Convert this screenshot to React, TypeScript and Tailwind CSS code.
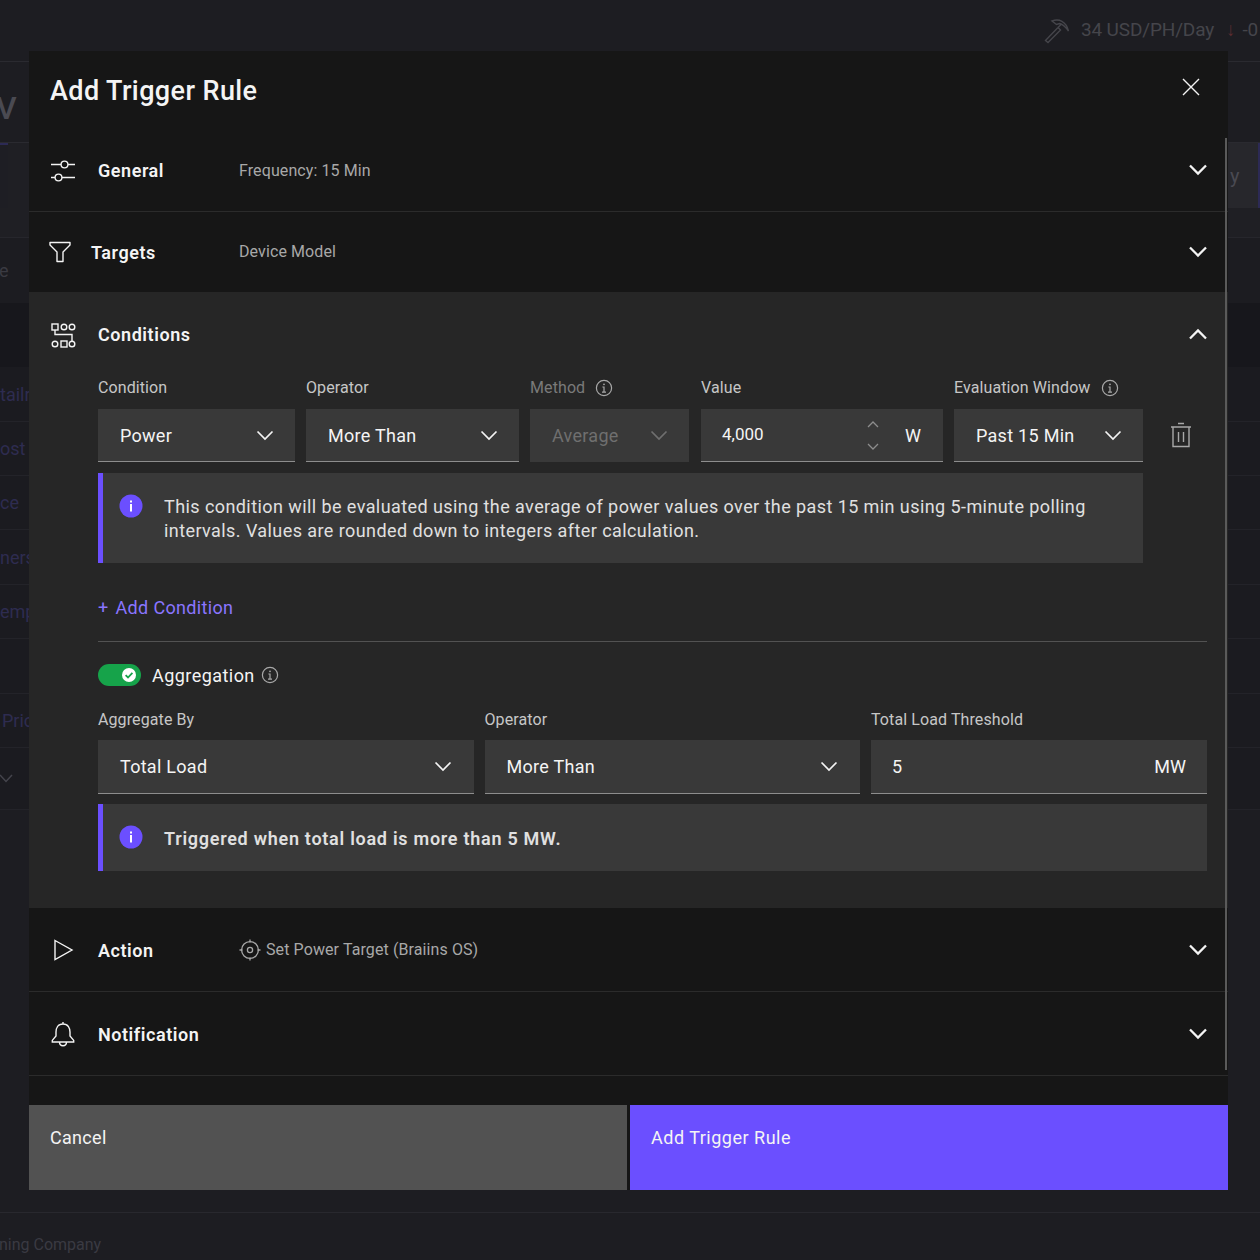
import React from "react";

const Chevron = ({ up = false, className = "" }: { up?: boolean; className?: string }) => (
  <svg width="20" height="12" viewBox="0 0 20 12" fill="none" stroke="currentColor" strokeWidth="2.3" className={className}>
    <path d={up ? "M2 10.5 L10 2.5 L18 10.5" : "M2 1.5 L10 9.5 L18 1.5"} />
  </svg>
);
const SmallChevron = ({ muted = false }: { muted?: boolean }) => (
  <svg width="18" height="11" viewBox="0 0 18 11" fill="none" stroke="currentColor" strokeWidth="1.7" className={muted ? "text-[#6f6f6f]" : "text-[#f4f4f4]"}>
    <path d="M1.5 1.5 L9 9 L16.5 1.5" />
  </svg>
);
const InfoOutline = () => (
  <svg width="18" height="18" viewBox="0 0 18 18" fill="none" stroke="#a8a8a8" strokeWidth="1.2">
    <circle cx="9" cy="9" r="7.6" />
    <path d="M7 13.2 H11 M9 13 V8 H7.4" />
    <circle cx="9" cy="5.3" r="0.9" fill="#a8a8a8" stroke="none" />
  </svg>
);
const InfoFilled = () => (
  <svg width="24" height="24" viewBox="0 0 24 24" className="shrink-0">
    <circle cx="12" cy="12" r="11.5" fill="#6b4fff" />
    <rect x="11" y="10" width="2" height="7.5" fill="#fff" />
    <rect x="11" y="6.5" width="2" height="2" fill="#fff" />
  </svg>
);

const icon = { fill: "none", stroke: "#f4f4f4", strokeWidth: 1.4 };
const SlidersIcon = () => (
  <svg width="26" height="24" viewBox="0 0 26 24" {...icon}>
    <path d="M1 5.5 H11 M18 5.5 H25 M1 18.5 H5 M12 18.5 H25" />
    <circle cx="14.5" cy="5.5" r="3.4" />
    <circle cx="8.5" cy="18.5" r="3.4" />
  </svg>
);
const FunnelIcon = () => (
  <svg width="22" height="22" viewBox="0 0 22 22" {...icon} strokeLinejoin="round">
    <path d="M1 1.5 H21 V4 L14 11 V20.5 H8 V11 L1 4 Z" />
  </svg>
);
const ConditionsIcon = () => (
  <svg width="26" height="26" viewBox="0 0 26 26" {...icon}>
    <rect x="2" y="2" width="6" height="6" />
    <circle cx="14" cy="5" r="2.8" />
    <circle cx="22" cy="5" r="2.8" />
    <path d="M5 8 V12.5 H22 V19" />
    <circle cx="5" cy="22" r="2.8" />
    <rect x="11" y="19" width="6" height="6" />
    <circle cx="22" cy="22" r="2.8" />
  </svg>
);
const PlayIcon = () => (
  <svg width="26" height="24" viewBox="0 0 26 24" {...icon}>
    <path d="M5 2.5 L22 12 L5 21.5 Z" />
  </svg>
);
const BellIcon = () => (
  <svg width="26" height="26" viewBox="0 0 26 26" {...icon}>
    <path d="M13 3 C7.8 3 6 7.2 6 11 V15 L2.3 19.4 V21 H23.7 V19.4 L20 15 V11 C20 7.2 18.2 3 13 3 Z M13 1 V3 M9.5 21 C9.5 26 16.5 26 16.5 21" />
  </svg>
);
const TargetIcon = () => (
  <svg width="22" height="22" viewBox="0 0 22 22" fill="none" stroke="#a8a8a8" strokeWidth="1.3">
    <circle cx="11" cy="11" r="8.4" />
    <circle cx="11" cy="11" r="2.6" />
    <path d="M11 0.5 V3.5 M11 18.5 V21.5 M0.5 11 H3.5 M18.5 11 H21.5" />
  </svg>
);
const TrashIcon = () => (
  <svg width="22" height="26" viewBox="0 0 22 26" fill="none" stroke="#a8a8a8" strokeWidth="1.4">
    <path d="M1 5 H21 M8 1.5 H14 M3 5 V24.5 H19 V5 M8.5 10 V20 M13.5 10 V20" />
  </svg>
);
const PickIcon = () => (
  <svg width="26" height="26" viewBox="0 0 26 26" fill="none" stroke="#45454b" strokeWidth="1.4" className="shrink-0">
    <path d="M1.5 22.5 L14 9.5 L16.5 12 L4 24.5 Z M8 3 C15 0.5 22 3 24.5 13 C21 8 18 6 15.5 5.5 L12.5 6.5 Z M14 9.5 L17.5 6" />
  </svg>
);

const Section = ({ ic, title, titleClass = "w-[141px] ml-[22px]", box = "h-[84px] pt-[1px]", chev = "", children, border = true }: { ic: React.ReactNode; title: string; titleClass?: string; box?: string; chev?: string; children?: React.ReactNode; border?: boolean }) => (
  <div className={`flex ${box} shrink-0 items-center pl-[21px] pr-[20px] ${border ? "border-b border-[#2b2b2b]" : ""}`}>
    <div className="flex w-[26px] justify-center">{ic}</div>
    <div className={`${titleClass} text-[18px] font-semibold tracking-[0.55px] text-[#f4f4f4]`}>{title}</div>
    <div className="flex flex-1 items-center gap-[5px] text-[16px] tracking-[0.1px] text-[#a8a8a8]">{children}</div>
    <Chevron className={`${chev} text-[#f4f4f4]`} />
  </div>
);

const Label = ({ children, info = false, muted = false, mb = "mb-[10px]" }: { children: React.ReactNode; info?: boolean; muted?: boolean; mb?: string }) => (
  <div className={`${mb} flex h-[22px] items-center gap-[10px] text-[16px] tracking-[0.1px] ${muted ? "text-[#7a7a7a]" : "text-[#c6c6c6]"}`}>
    {children}
    {info && <InfoOutline />}
  </div>
);

const Select = ({ value, muted = false, box = "h-[53px] pr-[21px]" }: { value: string; muted?: boolean; box?: string }) => (
  <div className={`flex ${box} items-center justify-between bg-[#393939] pl-[22px] text-[18px] tracking-[0.28px] ${muted ? "text-[#6f6f6f]" : "border-b border-[#8d8d8d] text-[#f4f4f4]"}`}>
    <span>{value}</span>
    <SmallChevron muted={muted} />
  </div>
);

const BgRow = ({ text, h, className = "" }: { text?: string; h: string; className?: string }) => (
  <div className={`${h} flex items-center overflow-hidden whitespace-nowrap border-b border-[#232329] ${className}`}>{text}</div>
);

export default function App() {
  return (
    <div className="relative h-[1260px] w-[1260px] overflow-hidden bg-[#1d1d22] font-['Roboto',sans-serif]">
      {/* dimmed page behind the dialog */}
      <div className="flex h-full flex-col text-[#34343c]">
        <div className="flex h-[62px] items-center whitespace-nowrap border-b border-[#2a2a30] pl-[1044px] text-[19px] tracking-[-0.15px]">
          <PickIcon />
          <span className="ml-[11px] text-[#45454b]">34 USD/PH/Day</span>
          <span className="ml-[12px] text-[#5a2c30]">↓</span>
          <span className="ml-[7px] text-[#45454b]">-0</span>
        </div>
        <div className="flex h-[81px] items-center border-b border-[#2a2a30] pt-[12px] text-[32px] font-medium text-[#4a4a52]">
          <span className="-ml-[4px]">V</span>
        </div>
        <div className="flex h-[95px] items-start justify-between border-b border-[#26262c] bg-[#1f1f24]">
          <div className="flex h-[65px]">
            <div className="h-[65px] w-[8px] border-t-2 border-[#2c2a55] bg-[#1e1e24]" />
          </div>
          <div className="flex h-[65px] w-[32px] items-center border-r-2 border-[#2c2a55] bg-[#27272c] pl-[2px] text-[20px] text-[#4a4a52]">
            y
          </div>
        </div>
        <div className="flex h-[65px] items-center bg-[#1c1c21] text-[18px] text-[#3a3a42]">
          <span className="-ml-[1px]">e</span>
        </div>
        <div className="h-[64px] bg-[#17171c]" />
        <div className="bg-[#1b1b20] text-[18px] text-[#2e2c50]">
          <BgRow h="h-[55px]" text="tailr" />
          <BgRow h="h-[54px]" text="ost" />
          <BgRow h="h-[54px]" text="ce" />
          <BgRow h="h-[55px]" text="ners" />
          <BgRow h="h-[54px]" text="emp" />
          <BgRow h="h-[55px]" />
          <BgRow h="h-[54px]" text="Pric" className="pl-[2px]" />
          <div className="flex h-[62px] items-center border-b border-[#232329] text-[#44444c]">
            <svg width="14" height="9" viewBox="0 0 14 9" fill="none" stroke="currentColor" strokeWidth="1.5"><path d="M0 1 L6 7.5 L12 1" /></svg>
          </div>
        </div>
        <div className="flex-1" />
        <div className="flex h-[48px] items-center border-t border-[#28282e] pt-[16px] text-[16px] text-[#3a3a42]">
          <span className="-ml-[1px] whitespace-nowrap">ning Company</span>
        </div>
      </div>

      {/* dialog */}
      <div className="absolute left-[29px] top-[51px] flex h-[1139px] w-[1199px] flex-col bg-[#161616]">
        <div className="relative flex h-[79px] shrink-0 items-start pl-[21px] pt-[24px] text-[27px] font-medium leading-[32px] tracking-[0.4px] text-[#f4f4f4]">
          Add Trigger Rule
          <svg width="20" height="20" viewBox="0 0 20 20" fill="none" stroke="#f4f4f4" strokeWidth="1.4" className="absolute right-[27px] top-[26px]">
            <path d="M2 2 L18 18 M18 2 L2 18" />
          </svg>
        </div>
        <div className="relative flex flex-1 flex-col">
          <div className="absolute right-[1px] top-[8px] h-[932px] w-[2px] bg-[#5a5a5a]" />
          <Section ic={<SlidersIcon />} title="General" box="h-[82px]" chev="-mt-[1px]"><span>Frequency: 15 Min</span></Section>
          <Section ic={<div className="-ml-[6px]"><FunnelIcon /></div>} title="Targets" titleClass="w-[148px] ml-[15px]" box="h-[80px]" border={false}><span>Device Model</span></Section>

          <div className="flex h-[616px] shrink-0 flex-col bg-[#262626] pl-[69px] pr-[21px]">
            <div className="-ml-[48px] flex h-[85px] shrink-0 items-center">
              <div className="flex w-[26px] justify-center"><ConditionsIcon /></div>
              <div className="ml-[22px] flex-1 text-[18px] font-semibold tracking-[0.55px] text-[#f4f4f4]">Conditions</div>
              <Chevron up className="-mr-px -mt-[1px] text-[#f4f4f4]" />
            </div>
            <div className="flex gap-[11px]">
              <div className="w-[197px]"><Label>Condition</Label><Select value="Power" /></div>
              <div className="w-[213px]"><Label>Operator</Label><Select value="More Than" /></div>
              <div className="w-[159px]"><Label info muted>Method</Label><Select value="Average" muted /></div>
              <div className="ml-px w-[242px]">
                <Label>Value</Label>
                <div className="flex h-[53px] items-center border-b border-[#8d8d8d] bg-[#393939] pl-[21px] pr-[22px] text-[17px] text-[#f4f4f4]">
                  <span className="flex-1">4,000</span>
                  <div className="mr-[26px] flex flex-col gap-[15px]">
                    <svg width="12" height="7" viewBox="0 0 12 7" fill="none" stroke="#8d8d8d" strokeWidth="1.3"><path d="M1 6 L6 1 L11 6" /></svg>
                    <svg width="12" height="7" viewBox="0 0 12 7" fill="none" stroke="#8d8d8d" strokeWidth="1.3"><path d="M1 1 L6 6 L11 1" /></svg>
                  </div>
                  <span className="text-[18px]">W</span>
                </div>
              </div>
              <div className="w-[189px]"><Label info>Evaluation Window</Label><Select value="Past 15 Min" /></div>
              <div className="ml-[16px] flex items-center pt-[30px]"><TrashIcon /></div>
            </div>

            <div className="mt-[11px] flex h-[90px] w-[1045px] shrink-0 gap-[21px] border-l-[5px] border-[#6b4fff] bg-[#393939] pl-[16px] pt-[21px] text-[18px] leading-[24px] tracking-[0.42px] text-[#e0e0e0]">
              <InfoFilled />
              <p className="mt-[1px] w-[960px]">This condition will be evaluated using the average of power values over the past 15 min using 5-minute polling intervals. Values are rounded down to integers after calculation.</p>
            </div>

            <div className="flex h-[79px] shrink-0 items-center gap-[7px] border-b border-[#525252] pt-[10px] text-[18px] tracking-[0.33px] text-[#8a75ff]">
              <span>+</span><span>Add Condition</span>
            </div>

            <div className="flex h-[67px] shrink-0 items-center pb-[1px] text-[18px] tracking-[0.45px] text-[#f4f4f4]">
              <div className="flex h-[22px] w-[43px] items-center justify-end rounded-full bg-[#16a34a] pr-[5px]">
                <svg width="14" height="14" viewBox="0 0 14 14">
                  <circle cx="7" cy="7" r="7" fill="#fff" />
                  <path d="M3.6 7.2 L6 9.5 L10.4 4.9" fill="none" stroke="#16a34a" strokeWidth="1.8" />
                </svg>
              </div>
              <span className="ml-[11px] mr-[6px]">Aggregation</span>
              <InfoOutline />
            </div>

            <div className="grid grid-cols-[375.5px_375.5px_336px] gap-[11px]">
              <div><Label mb="mb-[9px]">Aggregate By</Label><Select value="Total Load" box="h-[54px] pr-[22px]" /></div>
              <div><Label mb="mb-[9px]">Operator</Label><Select value="More Than" box="h-[54px] pr-[22px]" /></div>
              <div>
                <Label mb="mb-[9px]">Total Load Threshold</Label>
                <div className="flex h-[54px] items-center justify-between border-b border-[#8d8d8d] bg-[#393939] pl-[21px] pr-[21px] text-[18px] text-[#f4f4f4]">
                  <span>5</span><span>MW</span>
                </div>
              </div>
            </div>

            <div className="mt-[10px] flex h-[67px] shrink-0 items-center gap-[21px] border-l-[5px] border-[#6b4fff] bg-[#393939] pl-[16px] text-[18px] font-semibold tracking-[0.73px] text-[#e0e0e0]">
              <div className="-mt-[2px]"><InfoFilled /></div>
              <span className="mt-[2px]">Triggered when total load is more than 5 MW.</span>
            </div>
          </div>

          <Section ic={<PlayIcon />} title="Action">
            <TargetIcon /><span>Set Power Target (Braiins OS)</span>
          </Section>
          <Section ic={<BellIcon />} title="Notification" />
        </div>
        <div className="flex h-[85px] shrink-0 gap-[3px] text-[18px] leading-[24px] text-[#f4f4f4]">
          <div className="flex-1 bg-[#525252] pl-[21px] pt-[21px] tracking-[0.3px]">Cancel</div>
          <div className="flex-1 bg-[#6b4fff] pl-[21px] pt-[21px] tracking-[0.5px]">Add Trigger Rule</div>
        </div>
      </div>
    </div>
  );
}
